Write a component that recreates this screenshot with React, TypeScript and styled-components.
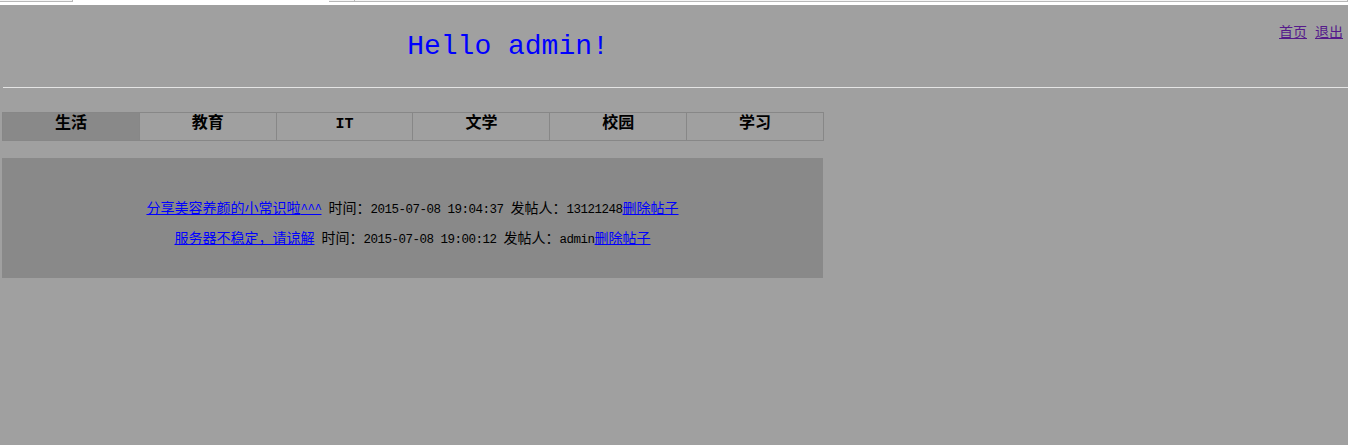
import React from "react";
import styled, { createGlobalStyle } from "styled-components";

const Global = createGlobalStyle`
  html, body { margin: 0; padding: 0; background: #a0a0a0; }
  body { font-family: "Noto Sans CJK SC", "Liberation Sans", sans-serif; }
`;

const TopStrip = styled.div`
  height: 5px;
  background: #ffffff;
  display: flex;
  align-items: flex-start;
`;

const StripBox = styled.div<{ $w?: number }>`
  height: 2px;
  box-sizing: border-box;
  border-bottom: 1px solid #b8b8b8;
  border-right: 1px solid #b8b8b8;
  background: #f4f4f4;
  width: ${(p) => (p.$w ? `${p.$w}px` : "auto")};
  flex: ${(p) => (p.$w ? "none" : "1")};
`;

const StripGap = styled.div<{ $w: number }>`
  width: ${(p) => p.$w}px;
  flex: none;
`;

const Page = styled.div`
  background: #a0a0a0;
  min-height: 440px;
`;

const Header = styled.header`
  display: flex;
  align-items: flex-start;
  height: 82px;
`;

const Title = styled.h1`
  margin: 26px 0 0 2px;
  width: 1012px;
  flex: none;
  text-align: center;
  font-family: "Liberation Mono", monospace;
  font-weight: normal;
  font-size: 28px;
  line-height: 32px;
  color: #0000ff;
`;

const NavLinks = styled.nav`
  margin: 18px 5px 0 auto;
  display: flex;
  gap: 8px;
  font-size: 14px;
  line-height: 16px;
`;

const NavLink = styled.a`
  color: #551a8b;
  text-decoration: underline;
`;

const Rule = styled.div`
  height: 1px;
  margin-left: 3px;
  background: #e4e4e4;
`;

const Tabs = styled.div`
  display: flex;
  margin: 24px 0 0 2px;
  width: 822px;
`;

const Tab = styled.div<{ $active?: boolean }>`
  flex: 1;
  height: 29px;
  box-sizing: border-box;
  border: 1px solid #878787;
  margin-left: -1px;
  &:first-child { margin-left: 0; }
  background: ${(p) => (p.$active ? "#898989" : "#a0a0a0")};
  display: flex;
  align-items: center;
  justify-content: center;
  padding-bottom: 11px;
  font-weight: bold;
  font-size: 16px;
  color: #000;
`;

const TabLabel = styled.span`
  display: block;
  line-height: 16px;
  height: 16px;
`;

const TabLatin = styled.span`
  font-family: "Liberation Mono", monospace;
  font-size: 15px;
  line-height: 16px;
`;

const Panel = styled.div`
  margin: 17px 0 0 2px;
  width: 821px;
  background: #898989;
  padding: 34px 0 26px;
  text-align: center;
  font-size: 14px;
  line-height: 30px;
  color: #000;
`;

const PostLine = styled.div`
  white-space: nowrap;
  height: 30px;
`;

const PostLink = styled.a`
  color: #0000ff;
  text-decoration: underline;
`;

const Latin = styled.span`
  font-family: "Liberation Mono", monospace;
  font-size: 12.5px;
  letter-spacing: -0.5px;
  line-height: 14px;
`;

const tabs = ["生活", "教育", "IT", "文学", "校园", "学习"];

const posts = [
  { title: "分享美容养颜的小常识啦", tail: "^^^", time: "2015-07-08 19:04:37", author: "13121248" },
  { title: "服务器不稳定，请谅解", tail: "", time: "2015-07-08 19:00:12", author: "admin" },
];

export default function App() {
  return (
    <>
      <Global />
      <TopStrip>
        <StripBox $w={73} />
        <StripGap $w={256} />
        <StripBox $w={26} />
        <StripBox />
      </TopStrip>
      <Page>
        <Header>
          <Title>Hello admin!</Title>
          <NavLinks>
            <NavLink href="#">首页</NavLink>
            <NavLink href="#">退出</NavLink>
          </NavLinks>
        </Header>
        <Rule />
        <Tabs>
          {tabs.map((t, i) => (
            <Tab key={t} $active={i === 0}>
              <TabLabel>{t === "IT" ? <TabLatin>{t}</TabLatin> : t}</TabLabel>
            </Tab>
          ))}
        </Tabs>
        <Panel>
          {posts.map((p) => (
            <PostLine key={p.title}>
              <PostLink href="#">
                {p.title}
                {p.tail && <Latin>{p.tail}</Latin>}
              </PostLink>
              <Latin> </Latin>时间：<Latin>{p.time} </Latin>发帖人：<Latin>{p.author}</Latin>
              <PostLink href="#">删除帖子</PostLink>
            </PostLine>
          ))}
        </Panel>
      </Page>
    </>
  );
}
